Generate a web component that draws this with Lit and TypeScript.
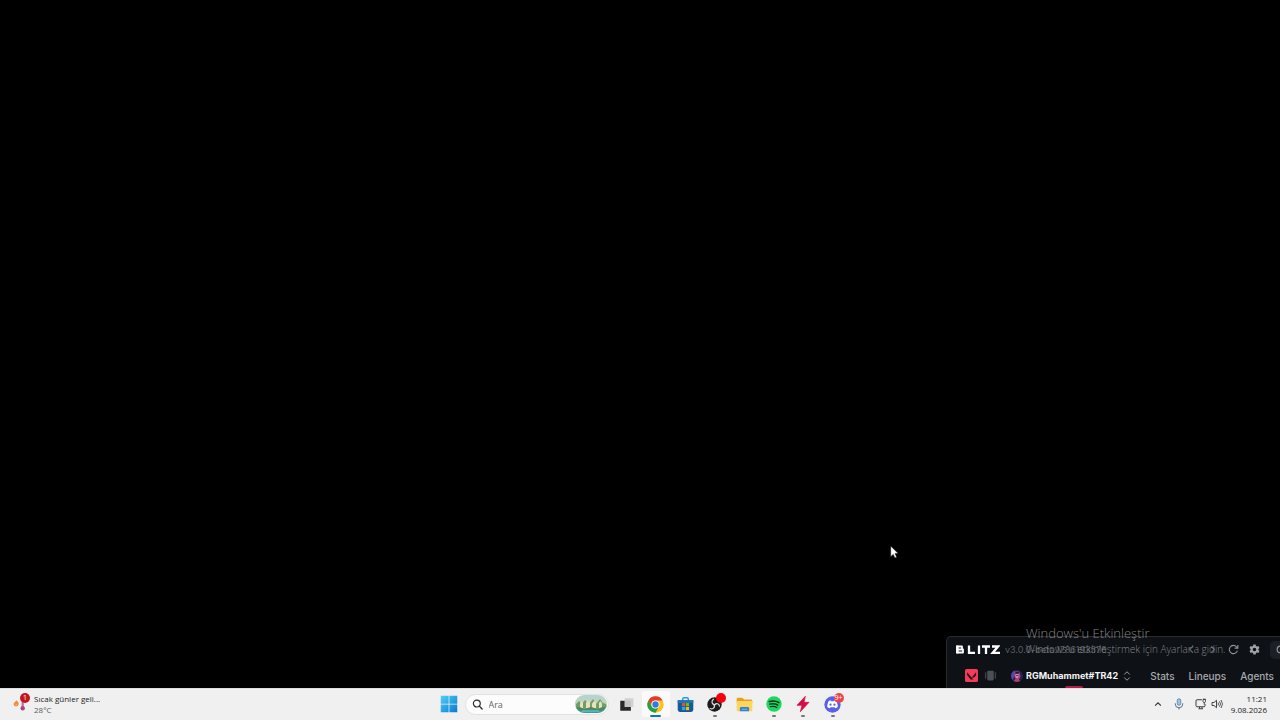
import { LitElement, html, svg, css } from "lit";
import { customElement } from "lit/decorators.js";
import { classMap } from "lit/directives/class-map.js";

const icon = (size: number, body: unknown, box = "0 0 24 24") =>
  html`<svg width=${size} height=${size} viewBox=${box} fill="none" aria-hidden="true">${body}</svg>`;

const art = {
  start: svg`<defs><linearGradient id="w" x1="0" y1="0" x2="1" y2="1"><stop stop-color="#4fd0f7"/><stop offset="1" stop-color="#0a78d0"/></linearGradient></defs>
    <path fill="url(#w)" d="M1 1h10.5v10.5H1zM12.5 1H23v10.5H12.5zM1 12.5h10.5V23H1zM12.5 12.5H23V23H12.5z"/>`,
  search: svg`<circle cx="10.5" cy="10" r="7.5" stroke="#2b2b2b" stroke-width="2.6"/><path d="M16 15.5l6 6.500" stroke="#2b2b2b" stroke-width="3" stroke-linecap="round"/>`,
  taskview: svg`<path fill="#d2d2d2" d="M9 2h14v14H9z"/><path fill="#282828" d="M2 6h7v10h10v6H2z"/><path fill="#a5a5a5" d="M9 6h10v10H9z" opacity=".3"/>`,
  chrome: svg`<circle cx="12" cy="12" r="11.500" fill="#fbc116"/>
    <path fill="#e33b2e" d="M2.040 6.250A11.500 11.500 0 0 1 21.960 6.250L12 6.250a5.750 5.750 0 0 0-5 8.600z"/>
    <path fill="#24a148" d="M2.040 6.250A11.500 11.500 0 0 0 12 23.500l5-8.650a5.750 5.750 0 0 1-10 0z"/>
    <circle cx="12" cy="12" r="5.750" fill="#fff"/><circle cx="12" cy="12" r="4.500" fill="#3478e5"/>`,
  store: svg`<path d="M8 7V4.500Q8 2.500 10 2.500h4q2 0 2 2V7" stroke="#1f9be0" stroke-width="2"/>
    <path fill="#155a9c" d="M1 6h22v13.500q0 3-3 3H4q-3 0-3-3z"/><path fill="#1b76ba" d="M1 6h22v4H1z"/>
    <path fill="#f25022" d="M7 10h4.500v4.500H7z"/><path fill="#7fba00" d="M12.500 10H17v4.500h-4.500z"/><path fill="#23a9f0" d="M7 15.500h4.500V20H7z"/><path fill="#ffb900" d="M12.500 15.500H17V20h-4.500z"/>`,
  obs: svg`<circle cx="12" cy="12" r="11.500" fill="#1b1b1d"/><g stroke="#d8d8d8" stroke-width="1.900" stroke-linecap="round">
    <path d="M10.500 3.500c-3 2-3.500 6-.5 8 1.500 1 3 .8 4-.2"/><path d="M20 14.500c-.7-3.500-4.500-5.200-7-3-1.500 1.300-1.500 2.800-1 4"/><path d="M5 18.500c3.500 1.500 7-.5 7-4 0-1.500-.8-2.500-2-3"/></g>`,
  folder: svg`<path fill="#e2a21c" d="M1 4q0-1.500 1.500-1.500H9L11.500 5H21q2 0 2 2v3H1z"/><path fill="#ffd45c" d="M1 7h22v13q0 1.500-1.500 1.500h-19Q1 21.500 1 20z"/><path fill="#2d83cf" d="M5.500 17.500q0-2 2-2h9q2 0 2 2v4h-13z"/><path fill="#77b8ea" d="M8 18h8v1.500H8z"/>`,
  spotify: svg`<circle cx="12" cy="12" r="11.500" fill="#1ed760"/><g stroke="#10331c" stroke-linecap="round"><path stroke-width="2.500" d="M5 8.300c5-1.400 10-.9 14.200 1.500"/><path stroke-width="2.100" d="M5.700 12.300c4.200-1.200 8.500-.700 12 1.300"/><path stroke-width="1.800" d="M6.400 16c3.500-.9 7-.6 10 1.100"/></g>`,
  bolt: svg`<path fill="#d70b45" stroke="#d70b45" stroke-linejoin="round" d="M15.500 0.500L3 14h7.500L8 23.500l13-14h-7.500z"/>`,
  discord: svg`<circle cx="12" cy="12" r="11.500" fill="#5661e8"/><path fill="#fff" d="M8.500 6.500l1.200-.3.700 1.200h3.200l.7-1.200 1.200.3c1.600.6 2.300 1.200 2.700 2.200.9 2.200 1.300 4.500 1.200 7-1.200 1-2.400 1.500-3.600 1.700l-1-1.600H9.200l-1 1.600c-1.200-.2-2.400-.7-3.600-1.700-.1-2.500.3-4.800 1.200-7 .4-1 1.100-1.600 2.700-2.200z"/><circle cx="9.200" cy="12.300" r="1.600" fill="#5661e8"/><circle cx="14.800" cy="12.300" r="1.600" fill="#5661e8"/>`,
  chevronUp: svg`<path d="M5 16l7-7 7 7" stroke="#333" stroke-width="2.600"/>`,
  mic: svg`<rect x="8.500" y="1.500" width="7" height="13" rx="3.500" fill="#9dc4e3" stroke="#477ba5" stroke-width="1.500"/><path d="M4.500 10.500v1.500a7.500 7.500 0 0 0 15 0v-1.500M12 19.500V23" stroke="#48677f" stroke-width="1.800"/>`,
  network: svg`<path d="M14 3.500H4q-2 0-2 2v10q0 2 2 2h14q2 0 2-2V12M7 21.500h9M9 18v3M14 18v3" stroke="#333" stroke-width="1.900"/><path d="M16 3v4q0 2 2.500 2T21 7V3zM17.500 1v2M20 1v2M18.500 9v4" stroke="#333" stroke-width="1.700"/>`,
  sound: svg`<path d="M2 9v6h4l5 4.500v-15L6 9z" stroke="#333" stroke-width="1.800" stroke-linejoin="round"/><path d="M14 9q2 3 0 6M17 6.500q4 5.500 0 11M20 4q6 8 0 16" stroke="#333" stroke-width="1.600"/>`,
  valorant: svg`<rect width="24" height="24" rx="3" fill="#f53b57"/><path fill="#24141d" d="M4 6l11.500 13.500H10.500L4 11.500zM20.500 6v5.500l-3.500 4.300h-4.500z"/>`,
  cards: svg`<rect x="6" y="3" width="12" height="18" rx="2" fill="#4c4f56"/><path d="M3 6v12M21 6v12" stroke="#3c3f46" stroke-width="2.600"/>`,
  avatar: svg`<defs><clipPath id="a"><circle cx="12" cy="12" r="12"/></clipPath></defs><g clip-path="url(#a)"><path fill="#29224d" d="M0 0h24v24H0z"/><path fill="#5148a8" d="M0 3l8-3v11l-5 9H0z"/><path fill="#9c4788" d="M6 6q5-7 11-1l2 8-4 7-7-3z"/><path fill="#df8ba0" d="M9 8l5-2 2 5-3 6-4-3z"/><path fill="#251a3c" d="M7 7l4-4 6 2-3 3zM10 10h5v1.500h-5z"/><path fill="#b03d72" d="M3 24l7-7 6 2 4 5z"/></g>`,
  sort: svg`<path d="M6.500 9L12 3.500 17.500 9M6.500 15l5.500 5.500 5.500-5.500" stroke="#9b9da3" stroke-width="2"/>`,
  back: svg`<path d="M15 5l-7 7 7 7" stroke="#5f6268" stroke-width="2.600"/>`,
  next: svg`<path d="M9 5l7 7-7 7" stroke="#5f6268" stroke-width="2.600"/>`,
  reload: svg`<path d="M20.500 14.500A9 9 0 1 1 18.500 6L21 8.500" stroke="#92949a" stroke-width="2.400"/><path d="M21.500 2v7h-7" stroke="#92949a" stroke-width="2.400"/>`,
  gear: svg`<path fill="#a0a2a8" fill-rule="evenodd" d="M9.500 1h5l.7 3.200 2 1.200L20.400 4.500l2.500 4.300L20.500 11v2l2.400 2.200-2.500 4.300-3.200-.9-2 1.200-.7 3.200h-5l-.7-3.200-2-1.200-3.200.9-2.500-4.300L3.500 13v-2L1.100 8.800l2.500-4.300 3.200.9 2-1.200zM12 8a4 4 0 1 0 0 8 4 4 0 0 0 0-8z"/>`,
  weather: svg`<path fill="#f38b32" d="M5 5q5 4 4 7-1 3-4 3T1 12q0-3 2-4 2-1 2-3z"/><path fill="#f7c28e" d="M4.500 10q2 2 1.500 3T4 13z"/><path d="M15.500 9v8" stroke="#c46a9b" stroke-width="3.500" stroke-linecap="round"/><circle cx="15.500" cy="18" r="3.500" fill="#a84580"/>`,
  scene: svg`<defs><linearGradient id="s" x1="0" y1="0" x2="0" y2="1"><stop stop-color="#b4d2d8"/><stop offset=".5" stop-color="#c3d5b5"/><stop offset="1" stop-color="#2f97a6"/></linearGradient></defs>
    <rect width="32" height="18" rx="9" fill="url(#s)"/><path fill="#6ea06a" d="M1 9l3-3 3 3 3-4 4 4 4-5 3 5 4-5 3 4 3 1 .5 3-5 3H4L1 12z"/><path fill="#eedfbb" d="M5 9q1-5 3-1v5H5zM11 8q2-5 4 0v5h-4zM17 9q2-5 4-1v5h-4zM24 8q2-4 3 1v4h-3z"/><path fill="#4b8b62" d="M1 13q3-2 6 0t6 0 6 0 6 0 6 0l-4 3H5z"/><path d="M7 16h17" stroke="#5cbac6" stroke-width="1.500"/>`,
  pointer: svg`<path d="M1 1v17l4-3.700L7.500 20l3-1.400L8 13h5z" fill="#fff" stroke="#111" stroke-width="1"/>`,
};

interface App {
  name: string;
  art: unknown;
  size: number;
  running?: boolean;
  active?: boolean;
  badge?: string;
}

const apps: App[] = [
  { name: "Görev görünümü", art: art.taskview, size: 15 },
  { name: "Chrome", art: art.chrome, size: 17, active: true },
  { name: "Store", art: art.store, size: 17 },
  { name: "OBS", art: art.obs, size: 15, running: true, badge: "" },
  { name: "Dosya Gezgini", art: art.folder, size: 17 },
  { name: "Spotify", art: art.spotify, size: 16, running: true },
  { name: "Blitz", art: art.bolt, size: 16, running: true },
  { name: "Discord", art: art.discord, size: 17, running: true, badge: "9+" },
];

const resets = css`
  button {
    border: 0;
    padding: 0;
    background: none;
    color: inherit;
    font: inherit;
    display: flex;
    align-items: center;
  }
  a {
    color: inherit;
    text-decoration: none;
  }
  svg {
    display: block;
    flex: none;
  }
`;

@customElement("blitz-window")
export class BlitzWindow extends LitElement {
  static styles = [
    resets,
    css`
      :host {
        display: block;
        box-sizing: border-box;
        overflow: hidden;
        background: #0e1116;
        border: 1px solid #292b31;
        border-width: 1px 0 0 1px;
        border-radius: 5px 0 0 0;
        font-family: Inter, sans-serif;
        color: #a7a9af;
      }
      .bar {
        display: flex;
        align-items: center;
        height: 25px;
        padding-left: 9px;
      }
      .logo {
        width: 44px;
        height: 9px;
      }
      .version {
        margin-left: 5px;
        font-size: 9px;
        color: #5b5e65;
      }
      .tools {
        display: flex;
        align-items: center;
        gap: 10px;
        margin-left: auto;
      }
      .pill {
        width: 10px;
        height: 18px;
        padding-left: 6px;
        border-radius: 5px 0 0 5px;
        background: #1d1f26;
        overflow: hidden;
        box-sizing: border-box;
      }
      .nav {
        display: flex;
        align-items: center;
        height: 27px;
        padding-left: 18px;
        font-size: 10px;
        font-weight: 500;
        white-space: nowrap;
      }
      .profile {
        gap: 3px;
        margin-left: 14px;
        color: #f5f5f6;
        font-size: 9px;
        font-weight: 700;
      }
      .games {
        display: flex;
        align-items: center;
        gap: 6px;
      }
      .links {
        display: flex;
        gap: 14px;
        margin-left: auto;
        padding-right: 6px;
      }
      .hint {
        position: absolute;
        left: 118px;
        bottom: 0;
        width: 18px;
        height: 2px;
        border-radius: 2px 2px 0 0;
        background: #b01f45;
      }
    `,
  ];

  render() {
    return html`
      <header class="bar">
        <svg class="logo" viewBox="0 0 44 9" role="img" aria-label="Blitz" fill="none" stroke="#fff" stroke-width="2">
          <path d="M1.500 1.500H6V4.500H1.500M6 4.500h1V7.500H1.500V0.500" stroke-width="1.800" stroke-linejoin="round" />
          <path d="M1.200 0.600v7.800M13 0.500V8h6M23 0.500v8.500M26 1.500h8M30 1.500V9M36 1.500h6L36.500 8H44" stroke-width="2.300" />
        </svg>
        <span class="version">v3.0.0-beta.1786193576</span>
        <div class="tools">
          <button aria-label="Back">${icon(11, art.back)}</button>
          <button aria-label="Forward">${icon(11, art.next)}</button>
          <button aria-label="Reload">${icon(11, art.reload)}</button>
          <button aria-label="Settings">${icon(11, art.gear)}</button>
          <button class="pill" aria-label="Search">
            ${icon(9, svg`<circle cx="12" cy="12" r="9" stroke="#92949a" stroke-width="3"/>`)}
          </button>
        </div>
      </header>
      <nav class="nav">
        <div class="games">
          <button aria-label="Valorant">${icon(13, art.valorant)}</button>
          <button aria-label="TFT">${icon(13, art.cards)}</button>
        </div>
        <button class="profile">${icon(12, art.avatar)}<span>RGMuhammet#TR42</span>${icon(12, art.sort)}</button>
        <div class="links"><a href="#stats">Stats</a><a href="#lineups">Lineups</a><a href="#agents">Agents</a></div>
      </nav>
      <div class="hint"></div>
    `;
  }
}

@customElement("task-bar")
export class TaskBar extends LitElement {
  static styles = [
    resets,
    css`
      :host {
        display: grid;
        grid-template-columns: 1fr auto 1fr;
        height: 32px;
        box-sizing: border-box;
        padding-bottom: 1px;
        background: #f0f0f0;
        border-top: 1px solid #dedede;
        font-family: "Open Sans", sans-serif;
        font-size: 8px;
        line-height: 11px;
        color: #1c1c1c;
      }
      .weather {
        position: relative;
        gap: 6px;
        justify-self: start;
        padding-left: 13px;
        text-align: left;
      }
      .lines {
        display: grid;
      }
      .temp {
        color: #5a5a5a;
      }
      .badge {
        position: absolute;
        display: grid;
        place-items: center;
        min-width: 10px;
        height: 10px;
        border-radius: 5px;
        background: #e8454d;
        color: #fff;
        font-size: 7px;
        line-height: 10px;
      }
      .weather .badge {
        left: 20px;
        top: 4px;
        background: #c4161c;
      }
      .center {
        display: flex;
        align-items: center;
        padding-left: 2px;
      }
      .start {
        width: 28px;
        justify-content: center;
      }
      .search {
        display: flex;
        align-items: center;
        gap: 6px;
        width: 144px;
        height: 21px;
        margin: 0 3px 0 2px;
        padding: 0 1px 0 6px;
        box-sizing: border-box;
        border: 1px solid #e2e2e2;
        border-radius: 11px;
        background: #fcfcfc;
      }
      .search input {
        flex: 1;
        min-width: 0;
        padding: 0;
        border: 0;
        outline: 0;
        background: none;
        font: inherit;
        font-size: 9px;
      }
      .search input::placeholder {
        color: #666;
        opacity: 1;
      }
      .apps {
        display: grid;
        grid-template-columns: repeat(8, 1fr);
        width: 236px;
        height: 100%;
      }
      .app {
        position: relative;
        justify-content: center;
        margin: 2px 1px;
        border-radius: 3px;
      }
      .active {
        background: #fafafa;
      }
      .running::after,
      .active::after {
        content: "";
        position: absolute;
        bottom: 0;
        width: 4px;
        height: 2px;
        border-radius: 1px;
        background: #777;
      }
      .active::after {
        width: 11px;
        background: #1274b8;
      }
      .app .badge {
        right: 3px;
        top: 2px;
      }
      .app .dot {
        background: #f5000c;
      }
      .tray {
        display: flex;
        align-items: center;
        justify-self: end;
        gap: 10px;
        padding-right: 13px;
      }
      .pair {
        gap: 4px;
      }
      .clock {
        display: grid;
        margin-left: -2px;
        text-align: right;
      }
    `,
  ];

  private renderApp(app: App) {
    const classes = { app: true, active: !!app.active, running: !!app.running };
    return html`<button class=${classMap(classes)} aria-label=${app.name}>
      ${icon(app.size, app.art)}
      ${app.badge === undefined
        ? null
        : html`<span class=${classMap({ badge: true, dot: app.badge === "" })}>${app.badge}</span>`}
    </button>`;
  }

  render() {
    return html`
      <button class="weather">
        ${icon(15, art.weather)}
        <span class="badge">1</span>
        <span class="lines"><span>Sıcak günler geli...</span><span class="temp">28°C</span></span>
      </button>
      <div class="center">
        <button class="start" aria-label="Başlat">${icon(18, art.start)}</button>
        <label class="search">
          ${icon(11, art.search)}
          <input type="text" placeholder="Ara" aria-label="Ara" />
          <svg width="32" height="18" viewBox="0 0 32 18" aria-hidden="true">${art.scene}</svg>
        </label>
        <div class="apps">${apps.map((app) => this.renderApp(app))}</div>
      </div>
      <div class="tray">
        <button aria-label="Gizli simgeler">${icon(10, art.chevronUp)}</button>
        <button aria-label="Mikrofon">${icon(12, art.mic)}</button>
        <button class="pair" aria-label="Ağ ve ses">${icon(12, art.network)}${icon(12, art.sound)}</button>
        <button class="clock"><span>11:21</span><span>9.08.2026</span></button>
      </div>
    `;
  }
}

@customElement("app-root")
export class AppRoot extends LitElement {
  static styles = css`
    :host {
      display: flex;
      flex-direction: column;
      height: 100vh;
      overflow: hidden;
      background: #000;
    }
    .desktop {
      position: relative;
      flex: 1;
      overflow: hidden;
    }
    blitz-window {
      position: absolute;
      right: 0;
      bottom: 0;
      width: 334px;
      height: 52px;
    }
    .watermark {
      position: absolute;
      right: 54px;
      bottom: 32px;
      width: 200px;
      font-family: "Open Sans", sans-serif;
      font-weight: 300;
      color: #85868a;
      white-space: nowrap;
    }
    .watermark p {
      margin: 0;
      font-size: 10px;
      line-height: 14px;
    }
    .watermark .title {
      font-size: 13px;
      line-height: 17px;
    }
    .pointer {
      position: absolute;
      left: 890px;
      top: 545px;
    }
  `;

  render() {
    return html`
      <main class="desktop">
        <blitz-window></blitz-window>
        <div class="watermark">
          <p class="title">Windows'u Etkinleştir</p>
          <p>Windows'u etkinleştirmek için Ayarlar'a gidin.</p>
        </div>
        <svg class="pointer" width="9" height="14" viewBox="0 0 14 21" aria-hidden="true">${art.pointer}</svg>
      </main>
      <task-bar></task-bar>
    `;
  }
}
